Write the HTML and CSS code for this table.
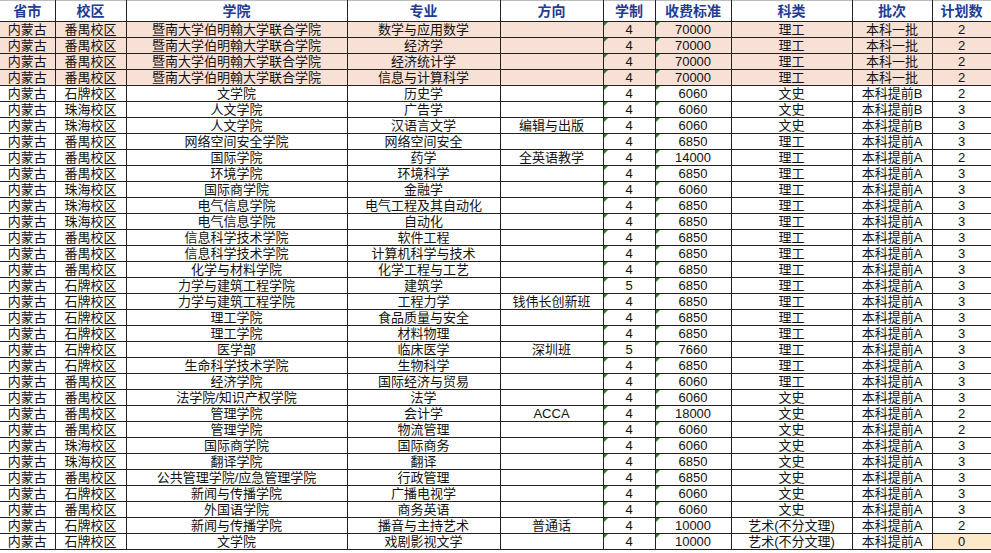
FILE: index.html
```html
<!DOCTYPE html>
<html lang="zh">
<head>
<meta charset="utf-8">
<link rel="stylesheet" href="styles.css">
</head>
<body>
<table class="sheet">
<colgroup>
<col class="c1"><col class="c2"><col class="c3"><col class="c4"><col class="c5"><col class="c6"><col class="c7"><col class="c8"><col class="c9"><col class="c10">
</colgroup>
<thead>
<tr><th>省市</th><th>校区</th><th>学院</th><th>专业</th><th>方向</th><th>学制</th><th>收费标准</th><th>科类</th><th>批次</th><th>计划数</th></tr>
</thead>
<tbody>
<tr class="hl"><td>内蒙古</td><td>番禺校区</td><td>暨南大学伯明翰大学联合学院</td><td>数学与应用数学</td><td></td><td class="tri">4</td><td class="tri">70000</td><td>理工</td><td>本科一批</td><td>2</td></tr>
<tr class="hl"><td>内蒙古</td><td>番禺校区</td><td>暨南大学伯明翰大学联合学院</td><td>经济学</td><td></td><td class="tri">4</td><td class="tri">70000</td><td>理工</td><td>本科一批</td><td>2</td></tr>
<tr class="hl"><td>内蒙古</td><td>番禺校区</td><td>暨南大学伯明翰大学联合学院</td><td>经济统计学</td><td></td><td class="tri">4</td><td class="tri">70000</td><td>理工</td><td>本科一批</td><td>2</td></tr>
<tr class="hl"><td>内蒙古</td><td>番禺校区</td><td>暨南大学伯明翰大学联合学院</td><td>信息与计算科学</td><td></td><td class="tri">4</td><td class="tri">70000</td><td>理工</td><td>本科一批</td><td>2</td></tr>
<tr><td>内蒙古</td><td>石牌校区</td><td>文学院</td><td>历史学</td><td></td><td class="tri">4</td><td class="tri">6060</td><td>文史</td><td>本科提前B</td><td>2</td></tr>
<tr><td>内蒙古</td><td>珠海校区</td><td>人文学院</td><td>广告学</td><td></td><td class="tri">4</td><td class="tri">6060</td><td>文史</td><td>本科提前B</td><td>3</td></tr>
<tr><td>内蒙古</td><td>珠海校区</td><td>人文学院</td><td>汉语言文学</td><td>编辑与出版</td><td class="tri">4</td><td class="tri">6060</td><td>文史</td><td>本科提前B</td><td>3</td></tr>
<tr><td>内蒙古</td><td>番禺校区</td><td>网络空间安全学院</td><td>网络空间安全</td><td></td><td class="tri">4</td><td class="tri">6850</td><td>理工</td><td>本科提前A</td><td>3</td></tr>
<tr><td>内蒙古</td><td>番禺校区</td><td>国际学院</td><td>药学</td><td>全英语教学</td><td class="tri">4</td><td class="tri">14000</td><td>理工</td><td>本科提前A</td><td>2</td></tr>
<tr><td>内蒙古</td><td>番禺校区</td><td>环境学院</td><td>环境科学</td><td></td><td class="tri">4</td><td class="tri">6850</td><td>理工</td><td>本科提前A</td><td>3</td></tr>
<tr><td>内蒙古</td><td>珠海校区</td><td>国际商学院</td><td>金融学</td><td></td><td class="tri">4</td><td class="tri">6060</td><td>理工</td><td>本科提前A</td><td>3</td></tr>
<tr><td>内蒙古</td><td>珠海校区</td><td>电气信息学院</td><td>电气工程及其自动化</td><td></td><td class="tri">4</td><td class="tri">6850</td><td>理工</td><td>本科提前A</td><td>3</td></tr>
<tr><td>内蒙古</td><td>珠海校区</td><td>电气信息学院</td><td>自动化</td><td></td><td class="tri">4</td><td class="tri">6850</td><td>理工</td><td>本科提前A</td><td>3</td></tr>
<tr><td>内蒙古</td><td>番禺校区</td><td>信息科学技术学院</td><td>软件工程</td><td></td><td class="tri">4</td><td class="tri">6850</td><td>理工</td><td>本科提前A</td><td>3</td></tr>
<tr><td>内蒙古</td><td>番禺校区</td><td>信息科学技术学院</td><td>计算机科学与技术</td><td></td><td class="tri">4</td><td class="tri">6850</td><td>理工</td><td>本科提前A</td><td>3</td></tr>
<tr><td>内蒙古</td><td>番禺校区</td><td>化学与材料学院</td><td>化学工程与工艺</td><td></td><td class="tri">4</td><td class="tri">6850</td><td>理工</td><td>本科提前A</td><td>3</td></tr>
<tr><td>内蒙古</td><td>石牌校区</td><td>力学与建筑工程学院</td><td>建筑学</td><td></td><td class="tri">5</td><td class="tri">6850</td><td>理工</td><td>本科提前A</td><td>3</td></tr>
<tr><td>内蒙古</td><td>石牌校区</td><td>力学与建筑工程学院</td><td>工程力学</td><td>钱伟长创新班</td><td class="tri">4</td><td class="tri">6850</td><td>理工</td><td>本科提前A</td><td>3</td></tr>
<tr><td>内蒙古</td><td>石牌校区</td><td>理工学院</td><td>食品质量与安全</td><td></td><td class="tri">4</td><td class="tri">6850</td><td>理工</td><td>本科提前A</td><td>3</td></tr>
<tr><td>内蒙古</td><td>石牌校区</td><td>理工学院</td><td>材料物理</td><td></td><td class="tri">4</td><td class="tri">6850</td><td>理工</td><td>本科提前A</td><td>3</td></tr>
<tr><td>内蒙古</td><td>石牌校区</td><td>医学部</td><td>临床医学</td><td>深圳班</td><td class="tri">5</td><td class="tri">7660</td><td>理工</td><td>本科提前A</td><td>3</td></tr>
<tr><td>内蒙古</td><td>石牌校区</td><td>生命科学技术学院</td><td>生物科学</td><td></td><td class="tri">4</td><td class="tri">6850</td><td>理工</td><td>本科提前A</td><td>3</td></tr>
<tr><td>内蒙古</td><td>番禺校区</td><td>经济学院</td><td>国际经济与贸易</td><td></td><td class="tri">4</td><td class="tri">6060</td><td>理工</td><td>本科提前A</td><td>3</td></tr>
<tr><td>内蒙古</td><td>番禺校区</td><td>法学院/知识产权学院</td><td>法学</td><td></td><td class="tri">4</td><td class="tri">6060</td><td>文史</td><td>本科提前A</td><td>3</td></tr>
<tr><td>内蒙古</td><td>番禺校区</td><td>管理学院</td><td>会计学</td><td>ACCA</td><td class="tri">4</td><td class="tri">18000</td><td>文史</td><td>本科提前A</td><td>2</td></tr>
<tr><td>内蒙古</td><td>番禺校区</td><td>管理学院</td><td>物流管理</td><td></td><td class="tri">4</td><td class="tri">6060</td><td>文史</td><td>本科提前A</td><td>2</td></tr>
<tr><td>内蒙古</td><td>珠海校区</td><td>国际商学院</td><td>国际商务</td><td></td><td class="tri">4</td><td class="tri">6060</td><td>文史</td><td>本科提前A</td><td>3</td></tr>
<tr><td>内蒙古</td><td>珠海校区</td><td>翻译学院</td><td>翻译</td><td></td><td class="tri">4</td><td class="tri">6850</td><td>文史</td><td>本科提前A</td><td>3</td></tr>
<tr><td>内蒙古</td><td>番禺校区</td><td>公共管理学院/应急管理学院</td><td>行政管理</td><td></td><td class="tri">4</td><td class="tri">6850</td><td>文史</td><td>本科提前A</td><td>3</td></tr>
<tr><td>内蒙古</td><td>石牌校区</td><td>新闻与传播学院</td><td>广播电视学</td><td></td><td class="tri">4</td><td class="tri">6060</td><td>文史</td><td>本科提前A</td><td>3</td></tr>
<tr><td>内蒙古</td><td>番禺校区</td><td>外国语学院</td><td>商务英语</td><td></td><td class="tri">4</td><td class="tri">6060</td><td>文史</td><td>本科提前A</td><td>3</td></tr>
<tr><td>内蒙古</td><td>石牌校区</td><td>新闻与传播学院</td><td>播音与主持艺术</td><td>普通话</td><td class="tri">4</td><td class="tri">10000</td><td>艺术(不分文理)</td><td>本科提前A</td><td>2</td></tr>
<tr><td>内蒙古</td><td>石牌校区</td><td>文学院</td><td>戏剧影视文学</td><td></td><td class="tri">4</td><td class="tri">10000</td><td>艺术(不分文理)</td><td>本科提前A</td><td class="warm">0</td></tr>
</tbody>
</table>
</body>
</html>
```
FILE: styles.css
```css
html, body {
  margin: 0;
  padding: 0;
  background: #ffffff;
}
body {
  font-family: "Liberation Sans", "Noto Sans CJK SC", sans-serif;
  color: #111;
  width: 991px;
  height: 553px;
  overflow: hidden;
}
.sheet {
  border-collapse: collapse;
  table-layout: fixed;
  width: 991px;
  border-top: 1px solid #bdbdbd;
}
.c1 { width: 55px; }
.c2 { width: 71px; }
.c3 { width: 221px; }
.c4 { width: 153px; }
.c5 { width: 103px; }
.c6 { width: 52px; }
.c7 { width: 76px; }
.c8 { width: 121px; }
.c9 { width: 80px; }
.c10 { width: 59px; }
.sheet th,
.sheet td {
  border: 1px solid #222;
  padding: 0;
  text-align: center;
  white-space: nowrap;
  overflow: hidden;
  vertical-align: middle;
}
.sheet th {
  height: 20px;
  font-size: 14px;
  font-weight: 700;
  color: #1f3c95;
  line-height: 20px;
  border-top: none;
}
.sheet td {
  height: 15px;
  font-size: 13px;
  line-height: 15px;
}
.sheet th:first-child,
.sheet td:first-child { border-left: none; }
.hl td { background: #f9e0d5; }
.tri { position: relative; }
.tri::before {
  content: "";
  position: absolute;
  left: 0;
  top: 0;
  border-top: 4px solid #2e7d32;
  border-right: 4px solid transparent;
}
.warm { background: #fde8c8; }
```
